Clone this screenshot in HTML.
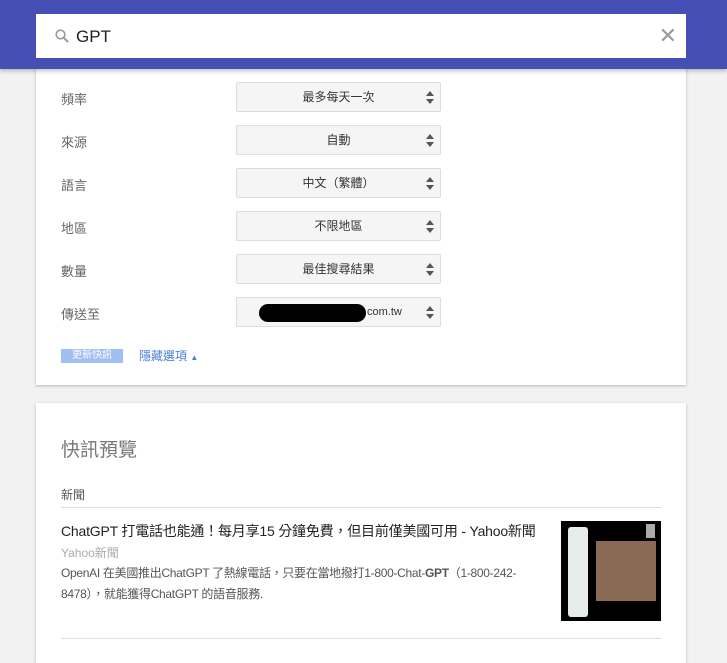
<!DOCTYPE html>
<html><head><meta charset="utf-8"><style>
*{box-sizing:border-box;margin:0;padding:0}
body{width:727px;height:645px;overflow:hidden;background:#f2f2f2;font-family:"Liberation Sans","Noto Sans CJK TC",sans-serif;position:relative}
.hdr{position:absolute;left:0;top:0;width:727px;height:69px;background:#4650b4;box-shadow:0 2px 4px rgba(0,0,0,.25);z-index:2}
.search{position:absolute;left:36px;top:14px;width:650px;height:44px;background:#fff}
.search .q{position:absolute;left:40px;top:13px;font-size:17px;color:#222}
.search .x{position:absolute;right:9px;top:10px;font-size:22px;color:#999;line-height:24px}
.card{position:absolute;left:36px;width:650px;background:#fff;box-shadow:0 1px 3px rgba(0,0,0,.25)}
.lab{position:absolute;left:25px;font-size:13px;color:#666}
.sel{position:absolute;left:200px;width:205px;height:30px;background:#f5f5f5;border:1px solid #ddd;border-radius:2px;font-size:12px;color:#333;text-align:center;line-height:28px}
.sel:after{content:"";position:absolute;right:6px;top:8px;border-left:4px solid transparent;border-right:4px solid transparent;border-bottom:5px solid #555}
.sel:before{content:"";position:absolute;right:6px;top:16px;border-left:4px solid transparent;border-right:4px solid transparent;border-top:5px solid #555}
</style></head><body>
<div class="hdr"><div class="search">
<svg style="position:absolute;left:19px;top:15px" width="14" height="14" viewBox="0 0 14 14"><circle cx="5.5" cy="5.5" r="4.3" fill="none" stroke="#999" stroke-width="1.6"/><line x1="8.6" y1="8.6" x2="13" y2="13" stroke="#999" stroke-width="2"/></svg>
<div class="q">GPT</div><div class="x">✕</div></div></div>
<div class="card" style="top:60px;height:325px">
<div class="lab" style="top:29px">頻率</div><div class="sel" style="top:22px">最多每天一次</div>
<div class="lab" style="top:72px">來源</div><div class="sel" style="top:65px">自動</div>
<div class="lab" style="top:115px">語言</div><div class="sel" style="top:108px">中文（繁體）</div>
<div class="lab" style="top:158px">地區</div><div class="sel" style="top:151px">不限地區</div>
<div class="lab" style="top:201px">數量</div><div class="sel" style="top:194px">最佳搜尋結果</div>
<div class="lab" style="top:244px">傳送至</div><div class="sel" style="top:237px"><span style="position:absolute;left:22px;top:6px;width:107px;height:18px;background:#000;border-radius:9px"></span><span style="position:absolute;left:130px;font-size:11px">com.tw</span></div>
<div style="position:absolute;left:25px;top:289px;width:62px;height:14px;background:#a0bff0;color:#fff;font-size:10px;line-height:14px;text-align:center">更新快訊</div>
<div style="position:absolute;left:103px;top:287px;font-size:12px;color:#4a7fd8">隱藏選項 <span style="font-size:8px">▲</span></div>
</div>
<div class="card" style="top:403px;height:260px">
<div style="position:absolute;left:25px;top:32px;font-size:19px;color:#777">快訊預覽</div>
<div style="position:absolute;left:25px;top:83px;font-size:12px;color:#555">新聞</div>
<div style="position:absolute;left:25px;top:104px;width:600px;height:1px;background:#ddd"></div>
<div style="position:absolute;left:25px;top:118px;font-size:14px;color:#222;letter-spacing:-0.2px">ChatGPT 打電話也能通！每月享15 分鐘免費，但目前僅美國可用 - Yahoo新聞</div>
<div style="position:absolute;left:25px;top:141px;font-size:12px;color:#aaa">Yahoo新聞</div>
<div style="position:absolute;left:25px;top:160px;width:475px;font-size:12px;color:#555;line-height:21px;letter-spacing:-0.3px">OpenAI 在美國推出ChatGPT 了熱線電話，只要在當地撥打1-800-Chat-<b>GPT</b>（1-800-242-8478），就能獲得ChatGPT 的語音服務.</div>
<div style="position:absolute;left:525px;top:118px;width:100px;height:100px;background:#000">
<div style="position:absolute;left:7px;top:6px;width:20px;height:90px;background:#e6ece8;border-radius:3px"></div>
<div style="position:absolute;left:35px;top:20px;width:60px;height:60px;background:#8a6a55"></div>
<div style="position:absolute;left:85px;top:3px;width:9px;height:14px;background:#aaa"></div></div>
<div style="position:absolute;left:25px;top:235px;width:600px;height:1px;background:#ddd"></div>
</div>
</body></html>
